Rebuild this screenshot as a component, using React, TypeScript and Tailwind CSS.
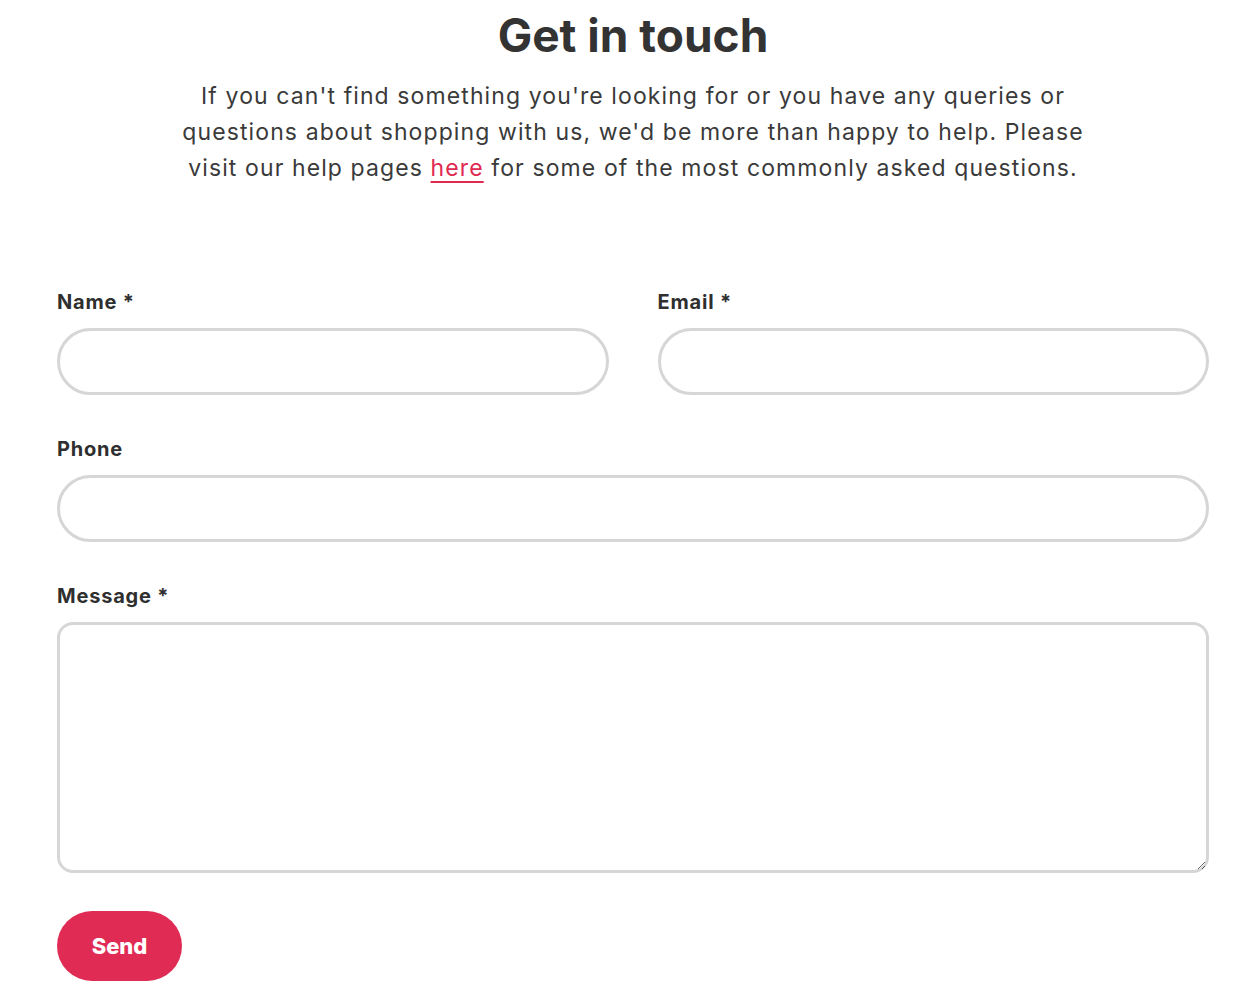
import { ReactNode } from 'react';

const font = { fontFamily: 'Inter, "Noto Sans", sans-serif' };

type FieldProps = {
  label: string,
  required?: boolean,
  children: ReactNode,
  className?: string
}

const Field = ({ label, required = false, children, className = "" }: FieldProps) => {
  return (
    <div className={`flex flex-col ${className}`}>
      <label className="text-[20px] leading-[28px] font-bold tracking-[0.8px] text-[#2f2f2f] mb-[12px]">
        {label}{required && " *"}
      </label>
      {children}
    </div>
  );
};

const inputClass = "h-[67px] w-full rounded-full border-[3px] border-[#d6d6d6] bg-white px-6 text-[18px] outline-none";

const ContactPage = () => {
  return (
    <div className="min-h-screen bg-white" style={font}>
      <div className="ml-[57px] w-[1152px] pt-[7px]">
        <h1 className="text-center text-[46px] leading-[56px] font-bold text-[#333333]">
          Get in touch
        </h1>
        <p className="mt-[15px] text-center text-[23px] leading-[36px] tracking-[1.1px] text-[#3a3a3a]">
          If you can't find something you're looking for or you have any queries or
          <br />
          questions about shopping with us, we'd be more than happy to help. Please
          <br />
          visit our help pages{" "}
          <a href="#" className="text-[#e0294f] underline underline-offset-[5px]">here</a>{" "}
          for some of the most commonly asked questions.
        </p>

        <form className="mt-[102px] flex flex-col" onSubmit={(e) => e.preventDefault()}>
          <div className="grid grid-cols-2 gap-x-[49px]">
            <Field label="Name" required>
              <input type="text" className={inputClass} />
            </Field>
            <Field label="Email" required>
              <input type="email" className={inputClass} />
            </Field>
          </div>

          <Field label="Phone" className="mt-[40px]">
            <input type="tel" className={inputClass} />
          </Field>

          <Field label="Message" required className="mt-[40px]">
            <textarea className="h-[251px] w-full rounded-[16px] border-[3px] border-[#d6d6d6] bg-white px-6 py-4 text-[18px] outline-none" />
          </Field>

          <div className="mt-[38px]">
            <button
              type="submit"
              className="h-[70px] w-[125px] rounded-full bg-[#e02c54] text-[22px] font-extrabold text-white"
            >
              Send
            </button>
          </div>
        </form>
      </div>
    </div>
  );
};

export default ContactPage;
